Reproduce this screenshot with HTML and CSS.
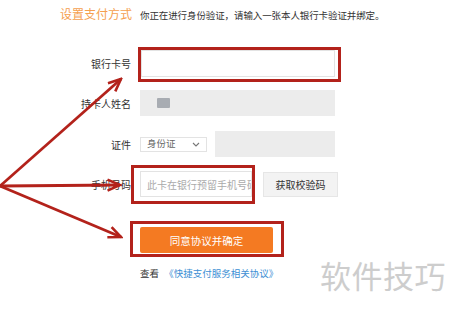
FILE: index.html
```html
<!DOCTYPE html>
<html>
<head>
<meta charset="utf-8">
<link rel="stylesheet" href="styles.css">
</head>
<body>
<div class="page">
  <div class="header">
    <span class="title">设置支付方式</span>
    <span class="subtitle">你正在进行身份验证，请输入一张本人银行卡验证并绑定。</span>
  </div>
  <div class="form">
    <div class="row r1">
      <div class="label">银行卡号</div>
      <div class="input white w1"></div>
    </div>
    <div class="row r2">
      <div class="label">持卡人姓名</div>
      <div class="input gray w2"><span class="mask"></span></div>
    </div>
    <div class="row r3">
      <div class="label">证件</div>
      <div class="select">身份证<svg class="chev" width="8" height="5" viewBox="0 0 8 5"><path d="M1 1 L4 4 L7 1" fill="none" stroke="#777" stroke-width="1.1"/></svg></div>
      <div class="input gray w3"></div>
    </div>
    <div class="row r4">
      <div class="label">手机号码</div>
      <div class="input white w4"><span class="ph">此卡在银行预留手机号码</span></div>
      <div class="btn-code">获取校验码</div>
    </div>
    <div class="row r5">
      <div class="label"></div>
      <div class="btn-main">同意协议并确定</div>
    </div>
    <div class="row r6">
      <div class="label"></div>
      <div class="agree">查看 <span class="link">《快捷支付服务相关协议》</span></div>
    </div>
  </div>
  <div class="watermark">软件技巧</div>
  <svg class="annot" width="450" height="313" viewBox="0 0 450 313">
    <defs>
      <marker id="ah" markerUnits="userSpaceOnUse" markerWidth="16" markerHeight="14" refX="14" refY="7" orient="auto">
        <path d="M1.5 1.5 L14 7 L1.5 12.5" fill="none" stroke="#b3221b" stroke-width="2.6" stroke-linejoin="miter"/>
      </marker>
    </defs>
    <rect x="139.5" y="48.5" width="200" height="32" fill="none" stroke="#b3221b" stroke-width="3"/>
    <rect x="132.5" y="166.5" width="121" height="36" fill="none" stroke="#b3221b" stroke-width="3"/>
    <rect x="131.5" y="222.5" width="151" height="33" fill="none" stroke="#b3221b" stroke-width="3"/>
    <line x1="0" y1="186" x2="121" y2="79" stroke="#b3221b" stroke-width="2.8" marker-end="url(#ah)"/>
    <line x1="0" y1="186" x2="120" y2="185" stroke="#b3221b" stroke-width="2.8" marker-end="url(#ah)"/>
    <line x1="0" y1="186" x2="121" y2="237" stroke="#b3221b" stroke-width="2.8" marker-end="url(#ah)"/>
  </svg>
</div>
</body>
</html>
```

FILE: styles.css
```css
* { box-sizing: border-box; }
html, body { margin: 0; padding: 0; background: #fff; }
body {
  font-family: "Noto Sans CJK SC", "Liberation Sans", sans-serif;
  color: #333;
  width: 450px;
  height: 313px;
  overflow: hidden;
}
.page { position: relative; width: 450px; height: 313px; }
.header {
  display: flex;
  align-items: baseline;
  gap: 8px;
  padding: 5px 0 0 60px;
  height: 30px;
}
.title { color: #f5a04e; font-size: 12px; }
.subtitle { color: #333; font-size: 9.5px; letter-spacing: -0.1px; }
.form { padding-top: 20px; }
.row { display: flex; align-items: center; }
.label {
  width: 131px;
  text-align: right;
  font-size: 10px;
  color: #333;
  margin-right: 9px;
  flex: none;
}
.input { height: 26px; flex: none; display: flex; align-items: center; }
.white { background: #fff; border: 1px solid #e3e3e3; }
.gray { background: #ececec; }
.r1 { height: 27px; }
.r1 .input { height: 27px; margin-left: 1px; }
.w1 { width: 194px; }
.r2 { margin-top: 13px; height: 26px; }
.w2 { width: 195px; }
.mask { width: 13px; height: 10px; background: #a8acb2; margin-left: 17px; border-radius: 1px; }
.r3 { margin-top: 15px; height: 26px; }
.select {
  width: 67px; height: 15px;
  border: 1px solid #e3e3e3;
  font-size: 9.5px; color: #666;
  display: flex; align-items: center; justify-content: space-between;
  padding: 0 6px 0 6px;
  line-height: 1;
}
.chev { display: block; }
.w3 { width: 120px; margin-left: 8px; }
.r4 { margin-top: 14px; height: 26px; }
.w4 { width: 112px; overflow: hidden; }
.ph { font-size: 10px; color: #aaa; white-space: nowrap; padding-left: 6px; }
.btn-code {
  margin-left: 11px;
  width: 75px; height: 25px;
  background: #f3f3f3;
  border: 1px solid #e6e6e6;
  font-size: 10px; color: #333;
  display: flex; align-items: center; justify-content: center;
}
.r5 { margin-top: 30px; height: 26px; }
.btn-main {
  width: 133px; height: 26px;
  background: #f47a22;
  border-radius: 2px;
  color: #fff; font-size: 10.5px;
  display: flex; align-items: center; justify-content: center;
}
.r6 { margin-top: 13px; }
.agree { font-size: 9.5px; color: #333; white-space: nowrap; }
.link { color: #3d8fd4; margin-left: 3px; }
.watermark {
  position: absolute;
  left: 320px; top: 252px;
  font-size: 31px;
  color: #cdcdcd;
  letter-spacing: 0.5px;
}
.annot { position: absolute; left: 0; top: 0; }
```
